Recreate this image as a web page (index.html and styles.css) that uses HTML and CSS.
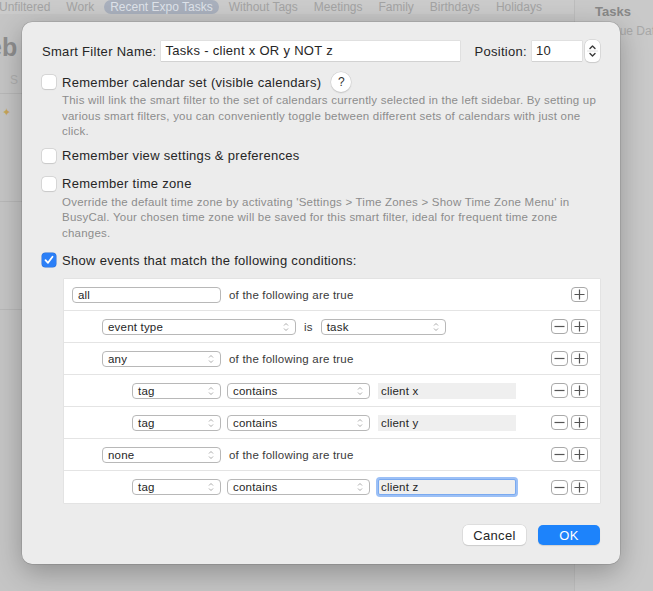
FILE: index.html
```html
<!DOCTYPE html>
<html>
<head>
<meta charset="utf-8">
<link rel="stylesheet" href="styles.css">
</head>
<body>
<div class="app">
  <div class="tabbar">
    <div class="tabs">
      <span class="tab">Unfiltered</span>
      <span class="tab">Work</span>
      <span class="tab tab-active">Recent Expo Tasks</span>
      <span class="tab">Without Tags</span>
      <span class="tab">Meetings</span>
      <span class="tab">Family</span>
      <span class="tab">Birthdays</span>
      <span class="tab">Holidays</span>
    </div>
  </div>
  <div class="app-body">
    <div class="cal">
      <div class="month">eb</div>
      <div class="weekday">S</div>
      <div class="cal-line"></div>
      <div class="cal-cell"><span class="spark">✦</span></div>
      <div class="cal-line"></div>
      <div class="cal-cell"></div>
      <div class="cal-line"></div>
    </div>
    <div class="side">
      <div class="side-title">Tasks</div>
      <div class="side-sub">Due Date</div>
    </div>
  </div>
</div>

<div class="dialog">
  <div class="name-row">
    <span class="lbl">Smart Filter Name:</span>
    <div class="text-input name-input">Tasks - client x OR y NOT z</div>
    <span class="lbl pos-lbl">Position:</span>
    <div class="text-input pos-input">10</div>
    <div class="stepper">
      <svg width="15" height="22" viewBox="0 0 15 22"><path d="M5 8.5 L7.5 6 L10 8.5" fill="none" stroke="#3a3a3a" stroke-width="1.4" stroke-linecap="round" stroke-linejoin="round"/><line x1="2" y1="11" x2="13" y2="11" stroke="#e2e2e2" stroke-width="1"/><path d="M5 13.5 L7.5 16 L10 13.5" fill="none" stroke="#3a3a3a" stroke-width="1.4" stroke-linecap="round" stroke-linejoin="round"/></svg>
    </div>
  </div>

  <div class="check-row r1">
    <span class="cb"></span>
    <span class="cb-label">Remember calendar set (visible calendars)</span>
    <span class="help">?</span>
  </div>
  <p class="desc">This will link the smart filter to the set of calendars currently selected in the left sidebar. By setting up<br>various smart filters, you can conveniently toggle between different sets of calendars with just one<br>click.</p>

  <div class="check-row r2">
    <span class="cb"></span>
    <span class="cb-label">Remember view settings &amp; preferences</span>
  </div>
  <div class="check-row r3">
    <span class="cb"></span>
    <span class="cb-label">Remember time zone</span>
  </div>
  <p class="desc">Override the default time zone by activating 'Settings &gt; Time Zones &gt; Show Time Zone Menu' in<br>BusyCal. Your chosen time zone will be saved for this smart filter, ideal for frequent time zone<br>changes.</p>

  <div class="check-row r4">
    <span class="cb cb-on"><svg width="14" height="14" viewBox="0 0 14 14"><path d="M3.5 7.2 L6 9.8 L10.5 3.8" fill="none" stroke="#fff" stroke-width="1.8" stroke-linecap="round" stroke-linejoin="round"/></svg></span>
    <span class="cb-label">Show events that match the following conditions:</span>
  </div>

  <div class="rules">
    <div class="rule lvl0">
      <div class="popup w149"><span>all</span></div>
      <span class="rtext">of the following are true</span>
      <div class="pm"><span class="pmb"><svg width="11" height="11" viewBox="0 0 11 11"><path d="M0.5 5.5 H10.5 M5.5 0.5 V10.5" stroke="#555" stroke-width="1.2"/></svg></span></div>
    </div>
    <div class="rule lvl1">
      <div class="popup w194"><span>event type</span><svg class="chev" width="6" height="10" viewBox="0 0 6 10"><path d="M1 3.5 L3 1.5 L5 3.5 M1 6.5 L3 8.5 L5 6.5" fill="none" stroke="#a0a0a0" stroke-width="0.9"/></svg></div>
      <span class="rtext is">is</span>
      <div class="popup w125"><span>task</span><svg class="chev" width="6" height="10" viewBox="0 0 6 10"><path d="M1 3.5 L3 1.5 L5 3.5 M1 6.5 L3 8.5 L5 6.5" fill="none" stroke="#a0a0a0" stroke-width="0.9"/></svg></div>
      <div class="pm"><span class="pmb"><svg width="11" height="11" viewBox="0 0 11 11"><path d="M0.5 5.5 H10.5" stroke="#555" stroke-width="1.2"/></svg></span><span class="pmb"><svg width="11" height="11" viewBox="0 0 11 11"><path d="M0.5 5.5 H10.5 M5.5 0.5 V10.5" stroke="#555" stroke-width="1.2"/></svg></span></div>
    </div>
    <div class="rule lvl1">
      <div class="popup w119"><span>any</span><svg class="chev" width="6" height="10" viewBox="0 0 6 10"><path d="M1 3.5 L3 1.5 L5 3.5 M1 6.5 L3 8.5 L5 6.5" fill="none" stroke="#a0a0a0" stroke-width="0.9"/></svg></div>
      <span class="rtext">of the following are true</span>
      <div class="pm"><span class="pmb"><svg width="11" height="11" viewBox="0 0 11 11"><path d="M0.5 5.5 H10.5" stroke="#555" stroke-width="1.2"/></svg></span><span class="pmb"><svg width="11" height="11" viewBox="0 0 11 11"><path d="M0.5 5.5 H10.5 M5.5 0.5 V10.5" stroke="#555" stroke-width="1.2"/></svg></span></div>
    </div>
    <div class="rule lvl2">
      <div class="popup w89"><span>tag</span><svg class="chev" width="6" height="10" viewBox="0 0 6 10"><path d="M1 3.5 L3 1.5 L5 3.5 M1 6.5 L3 8.5 L5 6.5" fill="none" stroke="#a0a0a0" stroke-width="0.9"/></svg></div>
      <div class="popup w143 gap6"><span>contains</span><svg class="chev" width="6" height="10" viewBox="0 0 6 10"><path d="M1 3.5 L3 1.5 L5 3.5 M1 6.5 L3 8.5 L5 6.5" fill="none" stroke="#a0a0a0" stroke-width="0.9"/></svg></div>
      <div class="field">client x</div>
      <div class="pm"><span class="pmb"><svg width="11" height="11" viewBox="0 0 11 11"><path d="M0.5 5.5 H10.5" stroke="#555" stroke-width="1.2"/></svg></span><span class="pmb"><svg width="11" height="11" viewBox="0 0 11 11"><path d="M0.5 5.5 H10.5 M5.5 0.5 V10.5" stroke="#555" stroke-width="1.2"/></svg></span></div>
    </div>
    <div class="rule lvl2">
      <div class="popup w89"><span>tag</span><svg class="chev" width="6" height="10" viewBox="0 0 6 10"><path d="M1 3.5 L3 1.5 L5 3.5 M1 6.5 L3 8.5 L5 6.5" fill="none" stroke="#a0a0a0" stroke-width="0.9"/></svg></div>
      <div class="popup w143 gap6"><span>contains</span><svg class="chev" width="6" height="10" viewBox="0 0 6 10"><path d="M1 3.5 L3 1.5 L5 3.5 M1 6.5 L3 8.5 L5 6.5" fill="none" stroke="#a0a0a0" stroke-width="0.9"/></svg></div>
      <div class="field">client y</div>
      <div class="pm"><span class="pmb"><svg width="11" height="11" viewBox="0 0 11 11"><path d="M0.5 5.5 H10.5" stroke="#555" stroke-width="1.2"/></svg></span><span class="pmb"><svg width="11" height="11" viewBox="0 0 11 11"><path d="M0.5 5.5 H10.5 M5.5 0.5 V10.5" stroke="#555" stroke-width="1.2"/></svg></span></div>
    </div>
    <div class="rule lvl1">
      <div class="popup w119"><span>none</span><svg class="chev" width="6" height="10" viewBox="0 0 6 10"><path d="M1 3.5 L3 1.5 L5 3.5 M1 6.5 L3 8.5 L5 6.5" fill="none" stroke="#a0a0a0" stroke-width="0.9"/></svg></div>
      <span class="rtext">of the following are true</span>
      <div class="pm"><span class="pmb"><svg width="11" height="11" viewBox="0 0 11 11"><path d="M0.5 5.5 H10.5" stroke="#555" stroke-width="1.2"/></svg></span><span class="pmb"><svg width="11" height="11" viewBox="0 0 11 11"><path d="M0.5 5.5 H10.5 M5.5 0.5 V10.5" stroke="#555" stroke-width="1.2"/></svg></span></div>
    </div>
    <div class="rule lvl2">
      <div class="popup w89"><span>tag</span><svg class="chev" width="6" height="10" viewBox="0 0 6 10"><path d="M1 3.5 L3 1.5 L5 3.5 M1 6.5 L3 8.5 L5 6.5" fill="none" stroke="#a0a0a0" stroke-width="0.9"/></svg></div>
      <div class="popup w143 gap6"><span>contains</span><svg class="chev" width="6" height="10" viewBox="0 0 6 10"><path d="M1 3.5 L3 1.5 L5 3.5 M1 6.5 L3 8.5 L5 6.5" fill="none" stroke="#a0a0a0" stroke-width="0.9"/></svg></div>
      <div class="field field-focus">client z</div>
      <div class="pm"><span class="pmb"><svg width="11" height="11" viewBox="0 0 11 11"><path d="M0.5 5.5 H10.5" stroke="#555" stroke-width="1.2"/></svg></span><span class="pmb"><svg width="11" height="11" viewBox="0 0 11 11"><path d="M0.5 5.5 H10.5 M5.5 0.5 V10.5" stroke="#555" stroke-width="1.2"/></svg></span></div>
    </div>
  </div>

  <div class="buttons">
    <span class="btn btn-cancel">Cancel</span>
    <span class="btn btn-ok">OK</span>
  </div>
</div>
</body>
</html>
```

FILE: styles.css
```css
html, body {
  margin: 0;
  padding: 0;
}
body {
  width: 653px;
  height: 591px;
  overflow: hidden;
  position: relative;
  background: #c5c5c5;
  font-family: "Liberation Sans", Arial, sans-serif;
  color: #262626;
}

/* background app (dimmed) */
.app {
  width: 653px;
  height: 591px;
  display: flex;
  flex-direction: column;
}
.tabbar {
  height: 14px;
  display: flex;
  align-items: flex-end;
  background: #cbcbcb;
}
.tabs {
  width: 574px;
  height: 14px;
  display: flex;
  align-items: center;
  gap: 16px;
  margin-left: -1px;
  font-size: 12px;
  line-height: 14px;
  color: #a3a3a3;
  white-space: nowrap;
  flex: none;
}
.tab-active {
  background: #a9b0bd;
  color: #dfe3ea;
  border-radius: 8px;
  padding: 0 6px;
  margin: 0 -6px;
}
.app-body {
  flex: 1;
  display: flex;
  margin-top: -14px;
}
.cal {
  width: 574px;
  display: flex;
  flex-direction: column;
  padding-top: 14px;
  flex: none;
}
.month {
  font-size: 25px;
  font-weight: bold;
  color: #8e8e8e;
  margin: 19px 0 0 -12px;
  height: 32px;
}
.weekday {
  font-size: 12px;
  color: #b0b0b0;
  margin: 8px 0 0 10px;
  height: 20px;
}
.cal-line {
  height: 1px;
  background: #b8b8b8;
}
.cal-cell {
  height: 107px;
}
.spark {
  color: #c8a55a;
  font-size: 11px;
  margin-left: 2px;
  display: inline-block;
  margin-top: 12px;
}
.side {
  flex: 1;
  border-left: 1px solid #bdbdbd;
  background: #c9c9c9;
}
.side-title {
  font-weight: bold;
  font-size: 13px;
  color: #888;
  margin: 4px 0 0 20px;
}
.side-sub {
  font-size: 12px;
  color: #a8a8a8;
  margin: 5px 0 0 36px;
  white-space: nowrap;
}

/* dialog */
.dialog {
  position: absolute;
  left: 22px;
  top: 22px;
  width: 598px;
  height: 542px;
  box-sizing: border-box;
  padding: 18px 20px 19px 20px;
  background: #ececec;
  border-radius: 10px;
  box-shadow: 0 0 0 0.5px rgba(0,0,0,0.18), 0 8px 28px rgba(0,0,0,0.28);
  display: flex;
  flex-direction: column;
  font-size: 13px;
  letter-spacing: 0.3px;
}
.name-row {
  height: 22px;
  display: flex;
  align-items: center;
}
.lbl {
  font-size: 13px;
  color: #262626;
  white-space: nowrap;
}
.text-input {
  height: 20px;
  line-height: 20px;
  background: #fff;
  font-size: 13px;
  padding-left: 4px;
  box-sizing: border-box;
  box-shadow: 0 0 0 0.5px #d4d4d4, 0 1px 0 #d0d0d0;
}
.name-input {
  width: 299px;
  margin-left: 5px;
}
.pos-lbl {
  margin-left: auto;
}
.pos-input {
  width: 50px;
  margin-left: 5px;
}
.stepper {
  width: 15px;
  height: 22px;
  margin-left: 3px;
  background: #fff;
  border-radius: 5px;
  box-shadow: 0 0 0 0.5px #c8c8c8, 0 1px 1px rgba(0,0,0,0.12);
}
.stepper svg { display: block; }

.check-row {
  height: 18px;
  display: flex;
  align-items: center;
}
.r1 { margin-top: 11px; }
.r2 { margin-top: 7px; }
.r3 { margin-top: 10px; }
.r4 { margin-top: 10px; }
.cb {
  width: 14px;
  height: 14px;
  border-radius: 3.5px;
  background: #fff;
  box-shadow: 0 0 0 0.5px #c4c4c4, 0 0.5px 1px rgba(0,0,0,0.12);
  flex: none;
}
.cb svg { display: block; }
.cb-on {
  background: #2b7ff7;
  box-shadow: 0 0 0 0.5px #2a6fd6;
}
.cb-label {
  margin-left: 6px;
  font-size: 13px;
  color: #262626;
  white-space: nowrap;
}
.help {
  width: 20px;
  height: 20px;
  border-radius: 50%;
  background: #fff;
  box-shadow: 0 0 0 0.5px #cfcfcf, 0 1px 1.5px rgba(0,0,0,0.2);
  display: flex;
  align-items: center;
  justify-content: center;
  font-size: 12px;
  margin-left: 10px;
  color: #333;
  letter-spacing: 0;
}
.desc {
  margin: 2px 0 0 20px;
  font-size: 11.5px;
  letter-spacing: 0.22px;
  line-height: 15.5px;
  color: #8c8c8c;
  white-space: nowrap;
}

/* rules table */
.rules {
  margin: 10px 0 0 22px;
  width: 536px;
  background: #fff;
  box-shadow: 0 0 0 0.5px #dadada;
  letter-spacing: 0.2px;
}
.rule {
  height: 32px;
  box-sizing: border-box;
  border-bottom: 1px solid #e4e4e4;
  display: flex;
  align-items: center;
  padding-right: 12px;
}
.rule:last-child { border-bottom: none; }
.lvl0 { padding-left: 8px; }
.lvl1 { padding-left: 38px; }
.lvl2 { padding-left: 68px; }
.popup {
  height: 16px;
  box-sizing: border-box;
  border: 1px solid #b8b8b8;
  border-radius: 4px;
  background: #fff;
  display: flex;
  align-items: center;
  justify-content: space-between;
  padding: 0 6px 0 5px;
  font-size: 11.5px;
  color: #262626;
  flex: none;
}
.chev { display: block; }
.w149 { width: 149px; }
.w194 { width: 194px; }
.w125 { width: 125px; }
.w119 { width: 119px; }
.w89 { width: 89px; }
.w143 { width: 143px; }
.gap6 { margin-left: 6px; }
.rtext {
  font-size: 11.5px;
  color: #3a3a3a;
  margin-left: 8px;
  white-space: nowrap;
}
.is { margin-right: 8px; }
.field {
  width: 138px;
  height: 16px;
  line-height: 16px;
  box-sizing: border-box;
  margin-left: 8px;
  background: #efefef;
  font-size: 11.5px;
  padding-left: 3px;
  color: #262626;
}
.field-focus {
  border: 1px solid #7aaaf0;
  box-shadow: 0 0 0 2px #9cc0f6;
  border-radius: 2px;
  line-height: 14px;
  padding-left: 2px;
}
.pm {
  margin-left: auto;
  display: flex;
  gap: 3px;
}
.pmb {
  width: 17px;
  height: 15px;
  box-sizing: border-box;
  border: 1px solid #a9a9a9;
  border-radius: 4px;
  background: #fff;
  display: flex;
  align-items: center;
  justify-content: center;
}
.pmb svg { display: block; }

.buttons {
  margin-top: 22px;
  display: flex;
  justify-content: flex-end;
  gap: 12px;
}
.btn {
  height: 20px;
  border-radius: 5px;
  display: flex;
  align-items: center;
  justify-content: center;
  font-size: 13px;
}
.btn-cancel {
  width: 63px;
  background: #fff;
  color: #262626;
  box-shadow: 0 0 0 0.5px #cfcfcf, 0 1px 1px rgba(0,0,0,0.15);
}
.btn-ok {
  width: 62px;
  background: #1d83fb;
  color: #fff;
  box-shadow: 0 1px 1px rgba(0,0,0,0.12);
}
```
